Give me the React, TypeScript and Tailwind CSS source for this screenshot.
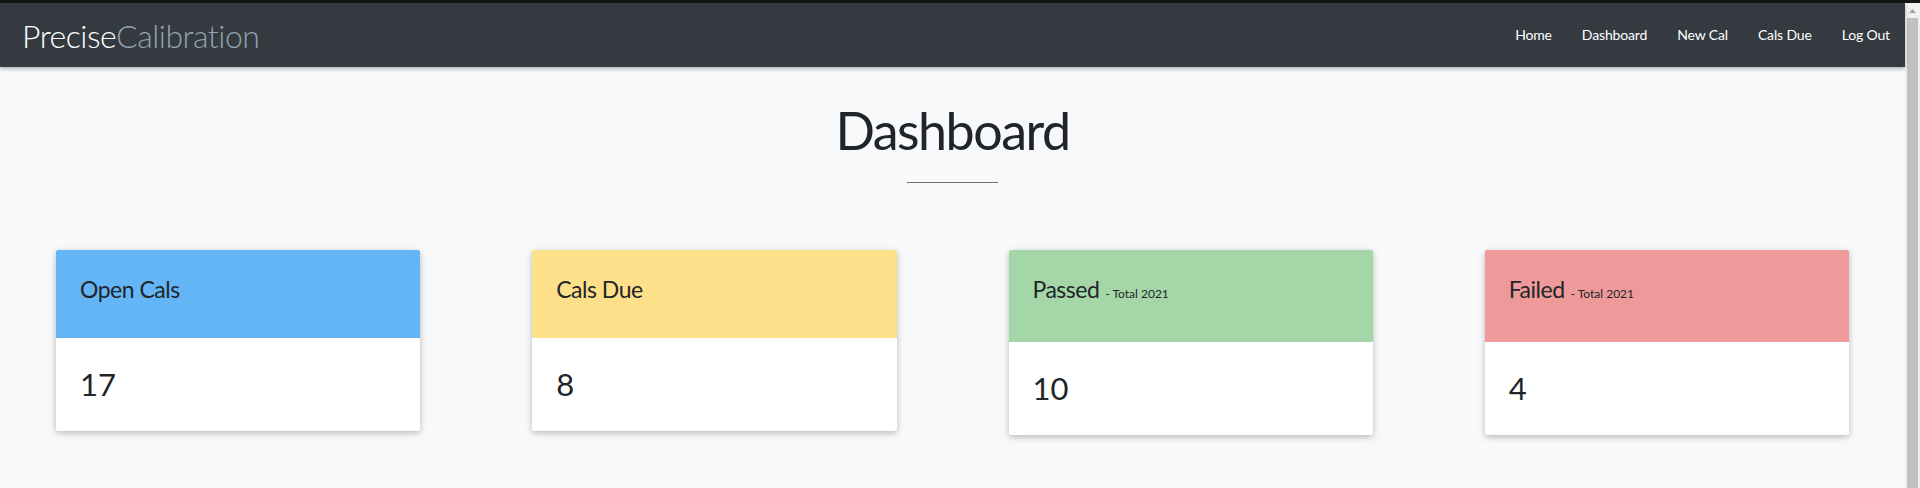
import React from "react";

type Card = {
  title: string;
  sub?: string;
  value: string;
  bg: string;
};

const cards: Card[] = [
  { title: "Open Cals", value: "17", bg: "bg-[#64b5f6]" },
  { title: "Cals Due", value: "8", bg: "bg-[#ffe08a]" },
  { title: "Passed", sub: "- Total 2021", value: "10", bg: "bg-[#a5d6a7]" },
  { title: "Failed", sub: "- Total 2021", value: "4", bg: "bg-[#ef9a9a]" },
];

const links = ["Home", "Dashboard", "New Cal", "Cals Due", "Log Out"];

export default function App() {
  return (
    <div
      className="min-h-[488px] h-[488px] overflow-hidden bg-[#f8f9fa] flex flex-col text-[#212529]"
      style={{ fontFamily: 'Lato, "Open Sans", sans-serif' }}
    >
      <div className="h-[3px] bg-[#161616] shrink-0" />
      <div className="flex flex-1 min-h-0">
        <div className="flex-1 flex flex-col min-w-0">
          <nav className="relative z-10 h-[64px] shrink-0 bg-[#343a40] flex items-start justify-between pl-[22px] pr-[15px] shadow-[0_2px_4px_rgba(0,0,0,0.28)]">
            <div className="pt-[17px] text-[32px] leading-none font-light tracking-[-0.5px]">
              <span className="text-white">Precise</span>
              <span className="text-[#93a2b1]">Calibration</span>
            </div>
            <ul className="flex gap-[30px] pt-[25px] text-[14px] leading-none text-white tracking-[-0.15px]">
              {links.map((l) => (
                <li key={l}>{l}</li>
              ))}
            </ul>
          </nav>
          <main className="flex flex-col">
            <h1 className="mt-[37px] text-center text-[52px] leading-none font-normal tracking-[-1.5px]">
              Dashboard
            </h1>
            <div className="mx-auto mt-[26px] w-[91px] h-px bg-[#707070]" />
            <div className="grid grid-cols-4 gap-[112px] px-[56px] mt-[67px] items-start">
              {cards.map((c) => (
                <div
                  key={c.title}
                  className="bg-white rounded-[2px] overflow-hidden shadow-[0_2px_5px_0_rgba(0,0,0,0.16),0_2px_10px_0_rgba(0,0,0,0.12)]"
                >
                  <div
                    className={`${c.bg} ${c.sub ? "h-[92px]" : "h-[88px]"} px-[24px] pt-[28px] flex items-baseline gap-[6px]`}
                  >
                    <span className="text-[23px] leading-none tracking-[-0.5px]">{c.title}</span>
                    {c.sub && <span className="text-[12px] leading-none">{c.sub}</span>}
                  </div>
                  <div className="h-[93px] px-[24px] flex items-center">
                    <span className="text-[31px] leading-none">{c.value}</span>
                  </div>
                </div>
              ))}
            </div>
          </main>
        </div>
        <div className="w-[15px] shrink-0 bg-[#f1f1f1] flex flex-col">
          <div className="h-[15px] flex items-center justify-center">
            <svg width="7" height="4" viewBox="0 0 7 4">
              <polygon points="3.5,0 7,4 0,4" fill="#a3a3a3" />
            </svg>
          </div>
          <div className="flex-1 mx-[2px] bg-[#c1c1c1]" />
        </div>
      </div>
    </div>
  );
}
